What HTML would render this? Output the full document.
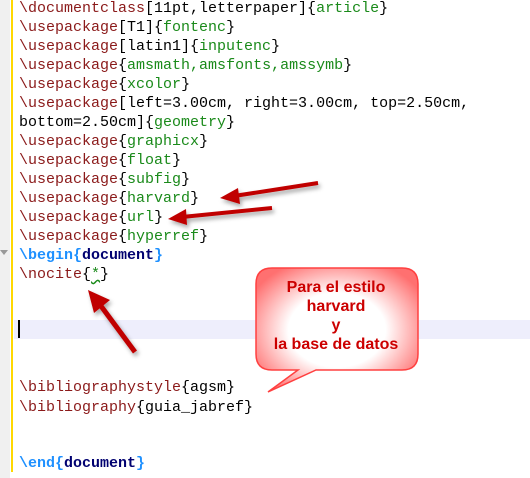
<!DOCTYPE html>
<html><head><style>
body{margin:0;width:530px;height:478px;background:#fff;position:relative;overflow:hidden;font-family:"Liberation Mono",monospace;}
.g{position:absolute;left:0;top:0;width:10px;height:478px;background:#f0f0f0}
.y{position:absolute;left:11px;top:0;width:2px;height:472px;background:#ffd800}
.hl{position:absolute;left:14px;top:320px;width:516px;height:19px;background:#eeeefc}
.cur{position:absolute;left:18px;top:320px;width:2px;height:18px;background:#000}
.l{position:absolute;left:19px;font-size:15px;line-height:19px;white-space:pre;color:#000}
.c{color:#8b1a1a}.a{color:#1a8a1a}.b{color:#1e90ff;font-weight:bold}.d{color:#000070;font-weight:bold}
.tri{position:absolute;left:0;top:250px;width:0;height:0;border-left:4px solid transparent;border-right:4px solid transparent;border-top:5px solid #999}
</style></head><body>
<div class="g"></div><div class="y"></div><div class="hl"></div><div class="cur"></div><div class="tri"></div>
<div class="l" style="top:-1px"><span class="c">\documentclass</span>[11pt,letterpaper]{<span class="a">article</span>}</div>
<div class="l" style="top:18px"><span class="c">\usepackage</span>[T1]{<span class="a">fontenc</span>}</div>
<div class="l" style="top:37px"><span class="c">\usepackage</span>[latin1]{<span class="a">inputenc</span>}</div>
<div class="l" style="top:56px"><span class="c">\usepackage</span>{<span class="a">amsmath,amsfonts,amssymb</span>}</div>
<div class="l" style="top:75px"><span class="c">\usepackage</span>{<span class="a">xcolor</span>}</div>
<div class="l" style="top:94px"><span class="c">\usepackage</span>[left=3.00cm, right=3.00cm, top=2.50cm,</div>
<div class="l" style="top:113px">bottom=2.50cm]{<span class="a">geometry</span>}</div>
<div class="l" style="top:132px"><span class="c">\usepackage</span>{<span class="a">graphicx</span>}</div>
<div class="l" style="top:151px"><span class="c">\usepackage</span>{<span class="a">float</span>}</div>
<div class="l" style="top:170px"><span class="c">\usepackage</span>{<span class="a">subfig</span>}</div>
<div class="l" style="top:189px"><span class="c">\usepackage</span>{<span class="a">harvard</span>}</div>
<div class="l" style="top:208px"><span class="c">\usepackage</span>{<span class="a">url</span>}</div>
<div class="l" style="top:227px"><span class="c">\usepackage</span>{<span class="a">hyperref</span>}</div>
<div class="l" style="top:246px"><span class="b">\begin{</span><span class="d">document</span><span class="b">}</span></div>
<div class="l" style="top:265px"><span class="c">\nocite</span>{<span class="a" style="text-decoration:underline wavy #1a8a1a">*</span>}</div>
<div class="l" style="top:378px"><span class="c">\bibliographystyle</span>{agsm}</div>
<div class="l" style="top:398px"><span class="c">\bibliography</span>{guia_jabref}</div>
<div class="l" style="top:454px"><span class="b">\end{</span><span class="d">document</span><span class="b">}</span></div>
<svg width="530" height="478" style="position:absolute;left:0;top:0">
<defs>
<filter id="s"><feDropShadow dx="2" dy="3" stdDeviation="2" flood-color="#000" flood-opacity="0.35"/></filter>
<radialGradient id="rg" cx="50%" cy="50%" r="60%"><stop offset="50%" stop-color="#fff"/><stop offset="100%" stop-color="#ff7070"/></radialGradient>
</defs>
<g filter="url(#s)" fill="#c00000" stroke="#c00000">
<line x1="318" y1="183" x2="234" y2="196" stroke-width="4"/><polygon points="220,198 238,188 240,204" stroke="none"/>
<line x1="272" y1="208" x2="182" y2="217" stroke-width="4"/><polygon points="168,219 186,209 187,225" stroke="none"/>
<line x1="135" y1="352" x2="98" y2="302" stroke-width="5"/><polygon points="88,290 110,300 94,313" stroke="none"/>
</g>
<path d="M272,268 H402 Q418,268 418,284 V354 Q418,370 402,370 H316 L268,392 L298,370 H272 Q256,370 256,354 V284 Q256,268 272,268 Z" fill="url(#rg)" stroke="#ff4040" stroke-width="1.5"/>
<g font-family="Liberation Sans, sans-serif" font-weight="bold" font-size="16" fill="#cc0000" text-anchor="middle">
<text x="336" y="292">Para el estilo</text>
<text x="336" y="311">harvard</text>
<text x="336" y="330">y</text>
<text x="336" y="349">la base de datos</text>
</g>
</svg>
</body></html>
